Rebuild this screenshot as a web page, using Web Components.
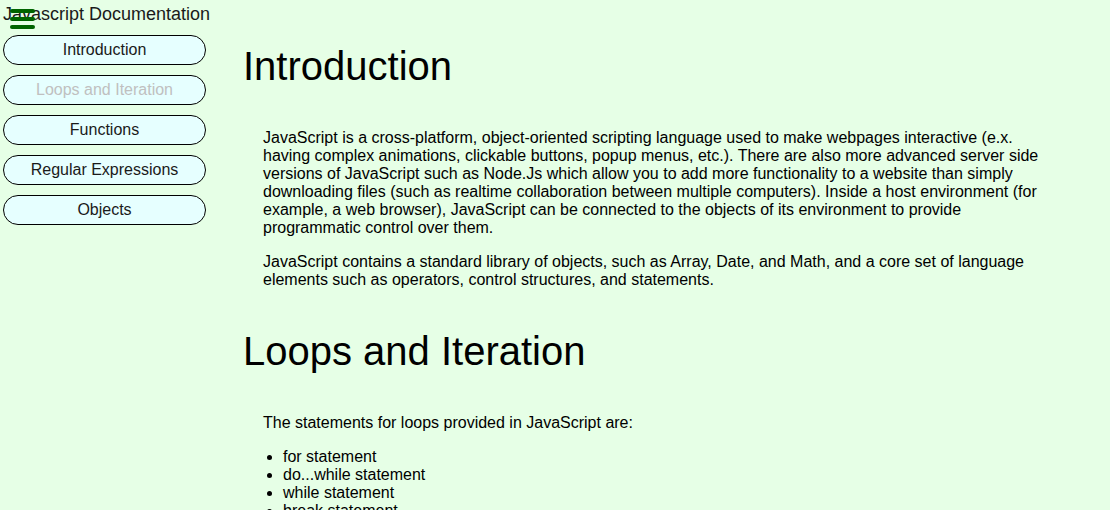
<!DOCTYPE html>
<html lang="en">
<head>
<meta charset="utf-8">
<meta name="viewport" content="width=device-width, initial-scale=1">
<title>Javascript Documentation</title>
<style>
  body {
    margin: 0;
    background: #e6ffe6;
    color: #000;
    font: 16px/18px "Liberation Sans", Arial, sans-serif;
  }
</style>
</head>
<body>
<docs-page>
  <docs-nav slot="nav" heading="Javascript Documentation">
    <nav-item href="#introduction">Introduction</nav-item>
    <nav-item href="#loops" active>Loops and Iteration</nav-item>
    <nav-item href="#functions">Functions</nav-item>
    <nav-item href="#regex">Regular Expressions</nav-item>
    <nav-item href="#objects">Objects</nav-item>
  </docs-nav>
  <docs-section id="introduction" heading="Introduction">
    <docs-text>JavaScript is a cross-platform, object-oriented scripting language used to make webpages interactive (e.x. having complex animations, clickable buttons, popup menus, etc.). There are also more advanced server side versions of JavaScript such as Node.Js which allow you to add more functionality to a website than simply downloading files (such as realtime collaboration between multiple computers). Inside a host environment (for example, a web browser), JavaScript can be connected to the objects of its environment to provide programmatic control over them.</docs-text>
    <docs-text>JavaScript contains a standard library of objects, such as Array, Date, and Math, and a core set of language elements such as operators, control structures, and statements.</docs-text>
  </docs-section>
  <docs-section id="loops" heading="Loops and Iteration">
    <docs-text>The statements for loops provided in JavaScript are:</docs-text>
    <docs-list items="for statement|do...while statement|while statement|break statement"></docs-list>
  </docs-section>
</docs-page>

<script>
  class DocsElement extends HTMLElement {
    connectedCallback() {
      if (this.shadowRoot) return;
      this.attachShadow({ mode: "open" }).innerHTML = this.render();
    }
  }

  customElements.define("docs-page", class extends DocsElement {
    render() {
      return `
        <style>
          :host { display: flex; height: 100vh; overflow: hidden; }
          main {
            flex: 1;
            min-width: 0;
            overflow-y: auto;
            scrollbar-width: none;
            padding: 4px 60px 0 34px;
          }
        </style>
        <slot name="nav"></slot>
        <main><slot></slot></main>`;
    }
  });

  customElements.define("docs-nav", class extends DocsElement {
    render() {
      return `
        <style>
          :host { display: block; position: relative; flex: none; width: 203px; padding: 4px 3px; color: #1a1a1a; }
          header { font-size: 18px; line-height: 21px; white-space: nowrap; }
          nav { display: flex; flex-direction: column; gap: 10px; margin-top: 10px; }
          button {
            position: absolute;
            top: 9px;
            left: 10px;
            display: block;
            padding: 0;
            border: 0;
            background: none;
            cursor: pointer;
          }
          svg { display: block; fill: #006400; }
        </style>
        <header>${this.getAttribute("heading")}</header>
        <button type="button" aria-label="Toggle menu">
          <svg width="25" height="20" viewBox="0 0 25 20" aria-hidden="true">
            <rect width="25" height="4" rx="2"/>
            <rect y="8" width="25" height="4" rx="2"/>
            <rect y="16" width="25" height="4" rx="2"/>
          </svg>
        </button>
        <nav aria-label="Topics"><slot></slot></nav>`;
    }
  });

  customElements.define("nav-item", class extends DocsElement {
    render() {
      return `
        <style>
          :host { display: block; }
          a {
            display: block;
            padding: 5px;
            border: 1px solid #000;
            border-radius: 15px;
            background: #e6ffff;
            color: inherit;
            text-align: center;
            text-decoration: none;
          }
          a:hover, :host([active]) a { color: #c0c0c0; }
        </style>
        <a href="${this.getAttribute("href")}"><slot></slot></a>`;
    }
  });

  customElements.define("docs-section", class extends DocsElement {
    render() {
      return `
        <style>
          :host { display: block; }
          h1 { margin: 39px 0 40px; font-size: 40px; line-height: 46px; font-weight: normal; }
          div { display: flex; flex-direction: column; gap: 16px; padding-left: 20px; }
        </style>
        <section>
          <h1>${this.getAttribute("heading")}</h1>
          <div><slot></slot></div>
        </section>`;
    }
  });

  customElements.define("docs-text", class extends DocsElement {
    render() {
      return `
        <style>
          :host { display: block; }
          p { margin: 0; }
        </style>
        <p><slot></slot></p>`;
    }
  });

  customElements.define("docs-list", class extends DocsElement {
    render() {
      const items = this.getAttribute("items").split("|");
      return `
        <style>
          :host { display: block; }
          ul { margin: 0; padding-left: 20px; }
        </style>
        <ul>${items.map(text => `<li>${text}</li>`).join("")}</ul>`;
    }
  });
</script>
</body>
</html>
